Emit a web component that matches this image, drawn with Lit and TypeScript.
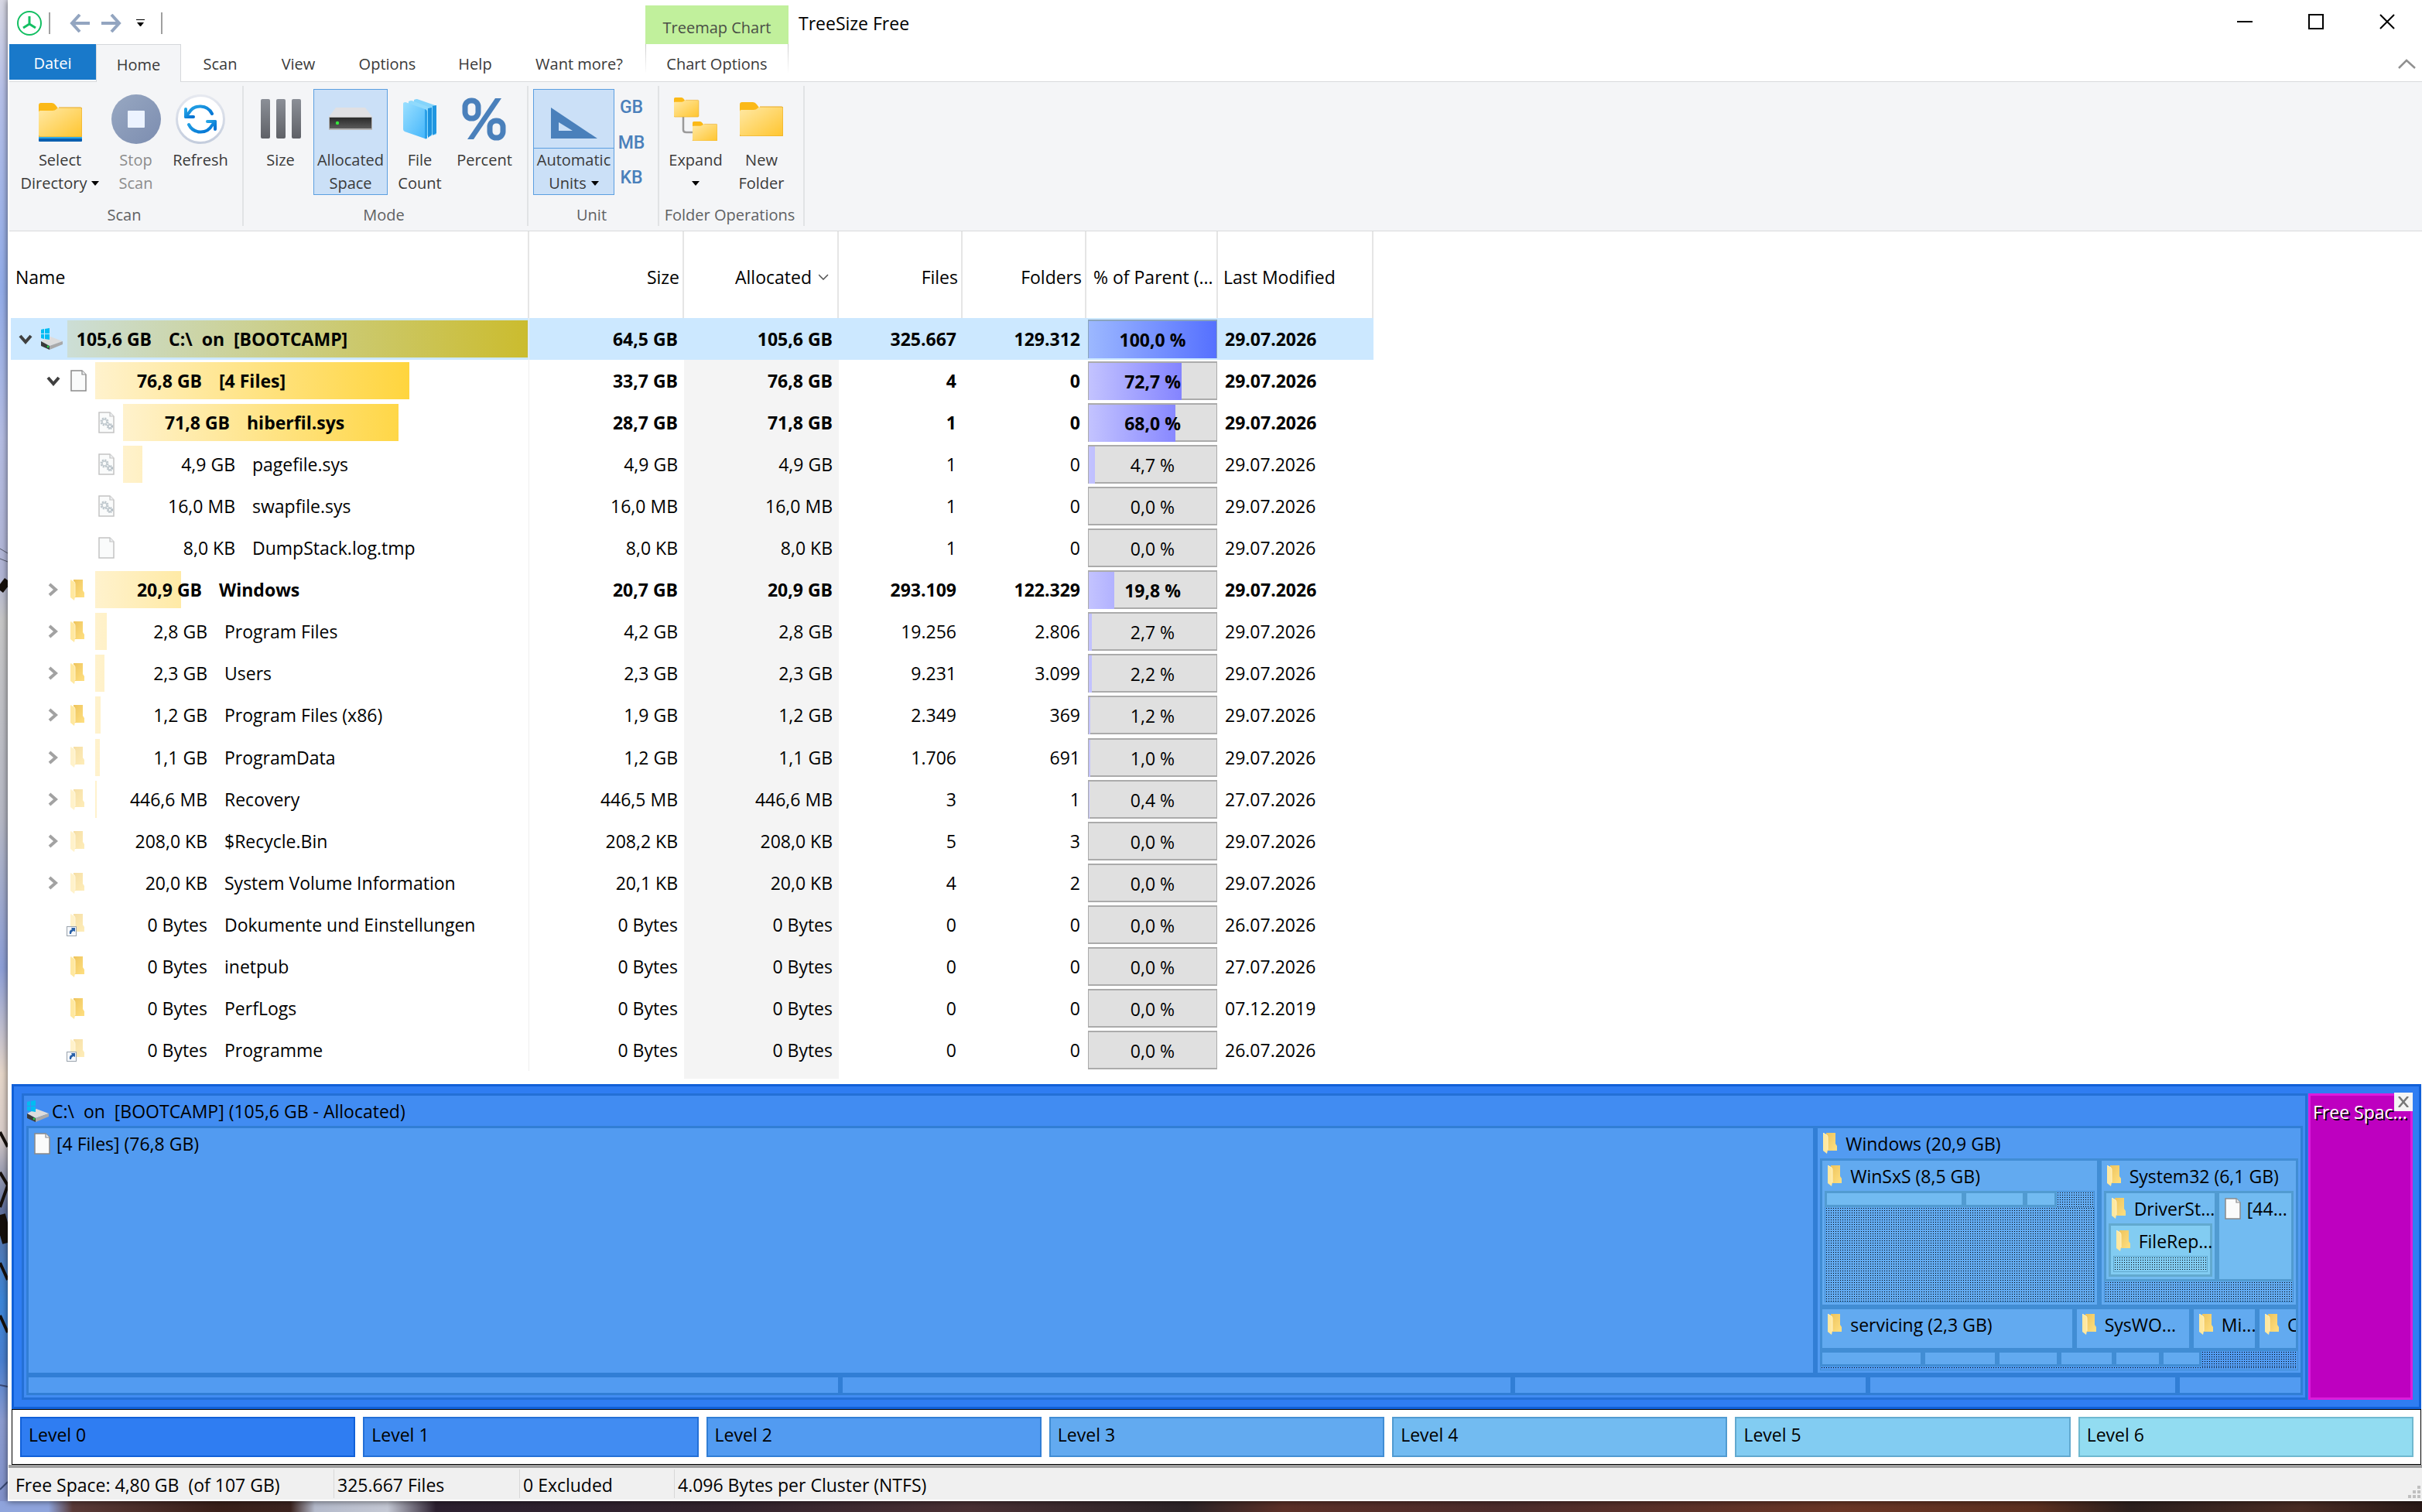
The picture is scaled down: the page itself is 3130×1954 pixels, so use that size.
import { LitElement, html, svg, css, nothing, TemplateResult } from "lit";
import { customElement, property } from "lit/decorators.js";
import { classMap } from "lit/directives/class-map.js";
import { styleMap } from "lit/directives/style-map.js";

type IconName = "drive" | "file" | "sys" | "tmp" | "folder" | "faded" | "link";

interface Entry {
  level: number;
  icon: IconName;
  open?: boolean;
  closed?: boolean;
  bold?: boolean;
  name: string;
  size: string;
  alloc: string;
  files: string;
  folders: string;
  pct: string;
  date: string;
}

const row = (
  level: number, icon: IconName, state: string, name: string, size: string, alloc: string,
  files: string, folders: string, pct: string, date: string,
): Entry => ({
  level, icon, name, size, alloc, files, folders, pct, date,
  open: state.includes("o"), closed: state.includes("c"), bold: state.includes("b"),
});

const ENTRIES: Entry[] = [
  row(0, "drive", "ob", "C:\\  on  [BOOTCAMP]", "64,5 GB", "105,6 GB", "325.667", "129.312", "100,0", "29.07.2026"),
  row(1, "file", "ob", "[4 Files]", "33,7 GB", "76,8 GB", "4", "0", "72,7", "29.07.2026"),
  row(2, "sys", "b", "hiberfil.sys", "28,7 GB", "71,8 GB", "1", "0", "68,0", "29.07.2026"),
  row(2, "sys", "", "pagefile.sys", "4,9 GB", "4,9 GB", "1", "0", "4,7", "29.07.2026"),
  row(2, "sys", "", "swapfile.sys", "16,0 MB", "16,0 MB", "1", "0", "0,0", "29.07.2026"),
  row(2, "tmp", "", "DumpStack.log.tmp", "8,0 KB", "8,0 KB", "1", "0", "0,0", "29.07.2026"),
  row(1, "folder", "cb", "Windows", "20,7 GB", "20,9 GB", "293.109", "122.329", "19,8", "29.07.2026"),
  row(1, "folder", "c", "Program Files", "4,2 GB", "2,8 GB", "19.256", "2.806", "2,7", "29.07.2026"),
  row(1, "folder", "c", "Users", "2,3 GB", "2,3 GB", "9.231", "3.099", "2,2", "29.07.2026"),
  row(1, "folder", "c", "Program Files (x86)", "1,9 GB", "1,2 GB", "2.349", "369", "1,2", "29.07.2026"),
  row(1, "faded", "c", "ProgramData", "1,2 GB", "1,1 GB", "1.706", "691", "1,0", "29.07.2026"),
  row(1, "faded", "c", "Recovery", "446,5 MB", "446,6 MB", "3", "1", "0,4", "27.07.2026"),
  row(1, "faded", "c", "$Recycle.Bin", "208,2 KB", "208,0 KB", "5", "3", "0,0", "29.07.2026"),
  row(1, "faded", "c", "System Volume Information", "20,1 KB", "20,0 KB", "4", "2", "0,0", "29.07.2026"),
  row(1, "link", "", "Dokumente und Einstellungen", "0 Bytes", "0 Bytes", "0", "0", "0,0", "26.07.2026"),
  row(1, "folder", "", "inetpub", "0 Bytes", "0 Bytes", "0", "0", "0,0", "27.07.2026"),
  row(1, "folder", "", "PerfLogs", "0 Bytes", "0 Bytes", "0", "0", "0,0", "07.12.2019"),
  row(1, "link", "", "Programme", "0 Bytes", "0 Bytes", "0", "0", "0,0", "26.07.2026"),
];

/* ---------- small item icons ---------- */

const folderShape = svg`
  <path d="M4 0H16V14L18 17V23H5Z" fill="url(#fs)"/>
  <path d="M0 0L5 3Q6 4 6 6V22L5 27L0 23Z" fill="#ffe8a0"/>
  <path d="M0 0L5 3Q6 4 6 6V22" fill="none" stroke="#fff3c8" stroke-width="1"/>
  <defs><linearGradient id="fs" x1="0" y1="0" x2="1" y2="1">
    <stop offset="0" stop-color="#eec45c"/><stop offset="1" stop-color="#ffe082"/>
  </linearGradient></defs>`;

const fileShape = (edge: string) => svg`
  <path d="M1 1H15L20 6V27H1Z" fill="#fafbfb" stroke=${edge} stroke-width="1.5"/>
  <path d="M15 1V6H20" fill="#eceef0" stroke=${edge} stroke-width="1.2"/>`;

const driveShape = svg`
  <path d="M1 17L13 11L29 17L12 23Z" fill="#dcdcdc"/>
  <path d="M12 23L29 17V21L12 28Z" fill="#a9a9a9"/>
  <path d="M1 17L12 23V28L1 23Z" fill="#3a3a3a"/>
  <circle cx="10" cy="24" r="1.4" fill="#2bd14c"/>
  <path d="M1 2L5 1V7H1ZM6 1L12 0V7H6ZM1 8H5V14L1 13ZM6 8H12V15L6 14Z" fill="#00bcf2"/>`;

function itemIcon(name: IconName): TemplateResult {
  switch (name) {
    case "drive":
      return html`<svg width="30" height="28" viewBox="0 0 30 28" aria-hidden="true">${driveShape}</svg>`;
    case "file":
      return html`<svg width="21" height="28" viewBox="0 0 21 28" aria-hidden="true">${fileShape("#8a8a8a")}</svg>`;
    case "tmp":
      return html`<svg width="21" height="28" viewBox="0 0 21 28" aria-hidden="true">${fileShape("#c4c4c4")}</svg>`;
    case "sys":
      return html`<svg width="21" height="28" viewBox="0 0 21 28" aria-hidden="true">
        ${fileShape("#c4c4c4")}
        <circle cx="8" cy="13" r="4" fill="none" stroke="#bcc5cb" stroke-width="3" stroke-dasharray="2 1.1"/>
        <circle cx="8" cy="13" r="3" fill="none" stroke="#c6ced3" stroke-width="1.6"/>
        <circle cx="15" cy="19" r="3" fill="none" stroke="#b4bec5" stroke-width="2.2" stroke-dasharray="1.6 0.8"/>
        <circle cx="15" cy="19" r="2" fill="none" stroke="#b4bec5" stroke-width="1"/>
      </svg>`;
    case "folder":
      return html`<svg width="18" height="27" viewBox="0 0 18 27" aria-hidden="true">${folderShape}</svg>`;
    case "faded":
      return html`<svg width="18" height="27" viewBox="0 0 18 27" aria-hidden="true"><g opacity="0.55">${folderShape}</g></svg>`;
    case "link":
      return html`<svg class="link" width="23" height="29" viewBox="0 0 23 29" aria-hidden="true">
        <g opacity="0.55" transform="translate(5 0)">${folderShape}</g>
        <rect x="0.5" y="16.500" width="12" height="12" fill="#f6f8fb" stroke="#9aa3ad"/>
        <path d="M4 26Q3 21 7 20L6 18H11V23L9 22Q6 23 6 26Z" fill="#2a61a8"/>
      </svg>`;
  }
}

const chevron = (open: boolean) => open
  ? html`<svg width="18" height="13" viewBox="0 0 18 13" aria-hidden="true"><path d="M2 2L9 10L16 2" fill="none" stroke="#404040" stroke-width="4"/></svg>`
  : html`<svg width="13" height="18" viewBox="0 0 13 18" aria-hidden="true"><path d="M2 2L10 9L2 16" fill="none" stroke="#a2a2a2" stroke-width="4"/></svg>`;

/* ---------- ribbon pictures ---------- */

const bigFolder = (x: number, y: number, k: number) => svg`
  <g transform="translate(${x} ${y}) scale(${k})">
    <path d="M0 3Q0 0 3 0H17Q20 0 22 3L25 7L22 12H0Z" fill="#fbb917"/>
    <path d="M0 12Q0 10 2 10H18Q21 10 23 8Q24 6 27 6H54Q56 6 56 8V42Q56 44 54 44H2Q0 44 0 42Z" fill="url(#bf)"/>
    <path d="M0 42Q0 44 2 44H54Q56 44 56 42V8Q56 6 54 6H26" fill="none" stroke="#e8a820" stroke-width="1"/>
  </g>`;
const bigFolderFill = svg`<defs><linearGradient id="bf" x1="0" y1="0" x2="1" y2="1">
  <stop offset="0" stop-color="#ffe9a6"/><stop offset="1" stop-color="#ffc52f"/></linearGradient></defs>`;

const PICTURES: Record<string, TemplateResult> = {
  select: html`<svg width="56" height="50" viewBox="0 0 56 50">${bigFolderFill}${bigFolder(0, 0, 1)}
    <rect y="44" width="56" height="3" fill="#2fa8ea"/><rect y="46" width="56" height="4" rx="1" fill="#0a5fb0"/></svg>`,
  stop: html`<svg width="64" height="64" viewBox="0 0 64 64"><defs><linearGradient id="st" x1="0" y1="0" x2="1" y2="1">
    <stop offset="0" stop-color="#98a8c2"/><stop offset="1" stop-color="#7c8db0"/></linearGradient></defs>
    <circle cx="32" cy="32" r="32" fill="url(#st)"/><rect x="21" y="21" width="22" height="22" rx="1" fill="#ecf3ff"/></svg>`,
  refresh: html`<svg width="64" height="64" viewBox="0 0 64 64"><defs><linearGradient id="rf" x1="0" y1="0" x2="1" y2="1">
    <stop offset="0" stop-color="#26a5e6"/><stop offset="1" stop-color="#0070d2"/></linearGradient>
    <linearGradient id="rr" x1="0" y1="0" x2="0" y2="1"><stop offset="0" stop-color="#e6e9f0"/><stop offset="1" stop-color="#c4cddd"/></linearGradient></defs>
    <circle cx="32" cy="32" r="30.500" fill="#fff" stroke="url(#rr)" stroke-width="3"/>
    <g fill="none" stroke="url(#rf)" stroke-width="4" stroke-linecap="round" stroke-linejoin="round">
      <path d="M47 25A17 17 0 0 0 17 24L13 29"/><path d="M13 19V29H23"/>
      <path d="M17 39A17 17 0 0 0 47 40L51 35"/><path d="M41 35H51V45"/></g></svg>`,
  size: html`<svg width="54" height="52" viewBox="0 0 54 52"><defs><linearGradient id="sz" x1="0" y1="0" x2="0" y2="1">
    <stop offset="0" stop-color="#8b8f97"/><stop offset="1" stop-color="#5f6167"/></linearGradient></defs>
    <rect x="1" width="12" height="51" rx="2" fill="url(#sz)"/><rect x="21" width="12" height="51" rx="2" fill="url(#sz)"/><rect x="41" width="12" height="51" rx="2" fill="url(#sz)"/></svg>`,
  allocated: html`<svg width="56" height="30" viewBox="0 0 56 30"><defs><linearGradient id="al" x1="0" y1="0" x2="0" y2="1">
    <stop offset="0" stop-color="#2a2a2a"/><stop offset="1" stop-color="#5a5a5a"/></linearGradient></defs>
    <path d="M9 0H47L56 12V14H0V12Z" fill="#e0e0e3"/><rect y="12" width="56" height="17" rx="1" fill="#b4b4b4"/>
    <rect x="1" y="13" width="54" height="14" fill="url(#al)"/><circle cx="11" cy="20" r="2.200" fill="#35e83c"/></svg>`,
  count: html`<svg width="44" height="52" viewBox="0 0 44 52"><defs><linearGradient id="ct" x1="0" y1="0" x2="1" y2="1">
    <stop offset="0" stop-color="#9be0ff"/><stop offset="1" stop-color="#41b4fb"/></linearGradient></defs>
    <path d="M14 1Q16 0 18 0L41 8Q43 9 43 11V44Q43 47 40 46L14 40Z" fill="#84d4fb"/><path d="M38 9L43 8V44L38 47Z" fill="#2196e0"/>
    <path d="M7 3Q9 2 11 2L35 11Q37 12 37 14V46Q37 49 34 48L7 42Z" fill="#90dafc"/><path d="M32 12L37 11V46L32 50Z" fill="#1c92de"/>
    <path d="M0 6Q0 4 3 4L28 13Q31 14 31 17V50Q31 52 28 51L2 42Q0 41 0 39Z" fill="url(#ct)"/><path d="M28 13Q31 14 31 17V50Q31 52 28 51Z" fill="#2a9fe8"/></svg>`,
  percent: html`<svg width="58" height="56" viewBox="0 0 58 56" fill="none" stroke="#4a80bb">
    <rect x="4" y="4" width="17" height="23" rx="8" stroke-width="7"/><rect x="36" y="30" width="17" height="22" rx="8" stroke-width="7"/>
    <path d="M43 1H51L15 54H7Z" fill="#4a80bb" stroke="none"/></svg>`,
  units: html`<svg width="60" height="40" viewBox="0 0 60 40"><path d="M0 0L60 40H0ZM10 19V30H28Z" fill="#4a80bb" fill-rule="evenodd"/></svg>`,
  expand: html`<svg width="56" height="56" viewBox="0 0 56 56">${bigFolderFill}
    <path d="M12 24V42Q12 45 16 45H26" fill="none" stroke="#9a9a9a" stroke-width="2.500"/>
    ${bigFolder(0, 0, 0.57)}${bigFolder(24, 31, 0.57)}</svg>`,
  folder: html`<svg width="56" height="44" viewBox="0 0 56 44">${bigFolderFill}${bigFolder(0, 0, 1)}</svg>`,
};

/* ---------- treemap tile ---------- */

@customElement("map-tile")
export class MapTile extends LitElement {
  @property({ type: Number }) level = 0;
  @property() label = "";
  @property() icon = "";

  static styles = css`
    :host { display: block; min-width: 0; min-height: 0; }
    .tile {
      box-sizing: border-box; height: 100%; overflow: hidden;
      display: flex; flex-direction: column;
      border: 3px solid; padding: 0 3px 3px;
    }
    .l1 { background: #418cf2; border-color: #2470d6; }
    .l2 { background: #529bf1; border-color: #317ed5; }
    .l3 { background: #62aaf0; border-color: #418dd4; }
    .l4 { background: #72bbf1; border-color: #519bd1; }
    .l5 { background: #82ccf2; border-color: #62a9cf; overflow: visible; }
    .title {
      display: flex; align-items: center; flex: none; gap: 11px; height: 39px; padding-left: 4px;
      font-size: 23px; line-height: 32px; color: #000; white-space: pre;
    }
    .title svg { flex: none; }
    .l1 > .title { gap: 3px; padding-left: 0; }
    .l2 > .file, .l4 > .file { gap: 8px; }
    .body { flex: 1; min-height: 0; display: grid; }
  `;

  render() {
    const cls = { tile: true, ["l" + this.level]: true };
    return html`<div class=${classMap(cls)}>
      ${this.label
        ? html`<div class=${classMap({ title: true, file: this.icon === "file" })}>${this.icon ? itemIcon(this.icon as IconName) : nothing}<span>${this.label}</span></div>`
        : nothing}
      ${this.label ? html`<div class="body"><slot></slot></div>` : nothing}
    </div>`;
  }
}

/* ---------- the window ---------- */

@customElement("app-root")
export class AppRoot extends LitElement {
  static styles = css`
    :host { display: block; font-family: "Open Sans", "Noto Sans", sans-serif; color: #000; }
    * { box-sizing: border-box; }
    button { font: inherit; color: inherit; border: 0; background: none; padding: 0; margin: 0; }
    svg { display: block; }

    .desktop {
      position: relative; min-height: 100vh; display: flex; flex-direction: column; padding: 0 0 14px 10px;
      background:
        linear-gradient(90deg, #8fa4dc 0 2%, #5a3a38 3%, #3a201a 9%, #3c2420 12%, #b4bacb 13%, #c4c8d4 16%, #2c2030 18%, #33242e 30%, #4a3034 40%, #2c2428 49%, #5c3028 53%, #4c2c2c 62%, #6a3626 76%, #5c3020 84%, #2c201e 88%, #4a2c24 95%, #2a1a18) bottom / 100% 14px no-repeat,
        linear-gradient(180deg, #d8d8e4, #b6c0e8 6%, #92ace8 19%, #b4bce2 29%, #b0b4d4 38%, #c6c6c6 41%, #b6b8c4 54%, #8c9ed6 64%, #e6d6c8 71%, #d8ccc8 75%, #60709c 80%, #3c86d8 86%, #4a80d0 90%, #8c9cd0 94%, #7f8fc8);
    }
    .branches { position: absolute; left: 0; top: 0; width: 10px; height: 100%; }
    .window {
      flex: 1; min-width: 0; display: flex; flex-direction: column; background: #fff; position: relative;
      box-shadow: 0 0 8px rgba(0, 0, 0, 0.6);
    }

    /* title bar and tabs share one band: the context tab spans both rows */
    .head { display: flex; height: 105px; padding-left: 2px; }
    .head-left { width: 822px; display: flex; flex-direction: column; flex: none; }
    .quick { height: 57px; display: flex; align-items: center; padding: 3px 0 0 10px; }
    .quick .sep { width: 2px; height: 28px; background: #a0a0a0; margin: 0 0 0 9px; }
    .quick .back { margin-left: 25px; }
    .quick .fwd { margin-left: 15px; }
    .quick .more { margin-left: 19px; }
    .quick .end { margin-left: 21px; }
    .tabs { display: grid; grid-template-columns: 112px 110px 101px 101px 129px 98px 171px; height: 48px; }
    .tab { font-size: 20px; line-height: 51px; color: #3a3a3a; height: 49px; text-align: center; }
    .tab.file { background: #1979ca; color: #fff; height: 46px; line-height: 49px; }
    .tab.active { background: #f4f5f7; border: 1px solid #d5d8db; border-bottom: 0; position: relative; height: 49px; }
    .context { width: 185px; padding-top: 7px; flex: none; display: flex; flex-direction: column; }
    .context-name { height: 50px; background: #c1f09c; color: #4a4f46; text-align: center; font-size: 20px; line-height: 58px; }
    .context .tab {
      height: 37px; border: 1px solid; border-top: 0; border-bottom: 0;
      border-image: linear-gradient(#c8c8c8, #fff) 1;
    }
    .title { flex: 1; font-size: 23px; line-height: 32px; padding: 14px 0 0 13px; }
    .sys { display: flex; flex-direction: column; align-items: flex-end; }
    .sys-row { display: flex; gap: 72px; padding: 18px 35px 0 0; height: 76px; }
    .sys-row button { height: 20px; }
    .collapse { padding-right: 8px; }

    .ribbon { display: flex; height: 194px; background: #f4f5f7; border: solid #d8dadc; border-width: 1px 0; margin-left: 2px; padding: 5px 0; flex: none; }
    .group { display: flex; flex-direction: column; justify-content: space-between; border-right: 2px solid #e1e3e5; height: 181px; flex: none; }
    .g-scan { width: 303px; } .g-mode { width: 368px; } .g-unit { width: 169px; } .g-ops { width: 188px; }
    .buttons { display: flex; padding: 4px 0 0 5px; }
    .g-scan .buttons, .g-unit .buttons { padding-left: 6px; }
    .group-name { text-align: center; font-size: 20px; line-height: 28px; color: #5f6163; padding-right: 4px; }
    .big {
      height: 137px; border: 1px solid transparent; display: flex; flex-direction: column; align-items: stretch;
      font-size: 20px; line-height: 30px; color: #3a3a3a; text-align: center;
    }
    .big.on { background: #cbe0f7; border-color: #5c9fe0; }
    .big.off { color: #8c8c8c; }
    .pic { height: 76px; display: flex; align-items: center; justify-content: center; flex: none; }
    .pic.low { padding-top: 8px; }
    .split .pic { border-bottom: 1px solid #5c9fe0; padding-top: 10px; }
    .cap { display: flex; justify-content: center; align-items: center; gap: 6px; height: 30px; white-space: nowrap; }
    .arrow { width: 0; height: 0; border: 5px solid transparent; border-top: 6px solid #000; border-bottom: 0; }
    .unit-list { width: 44px; height: 137px; display: flex; flex-direction: column; align-items: center; justify-content: space-between; padding: 9px 0 7px; }
    .unit-list button { font: 500 23px/30px Roboto, "Open Sans", sans-serif; color: #4a80bb; }

    .files { margin-left: 4px; }
    table { border-collapse: separate; border-spacing: 0; table-layout: fixed; width: 1761px; font-size: 23px; line-height: 32px; }
    th, td { padding: 0; font-weight: inherit; }
    thead th { height: 112px; border-right: 2px solid #e5e5e5; font-weight: 400; text-align: right; padding: 5px 4px 0 0; white-space: nowrap; background-clip: padding-box; }
    thead th.left { text-align: left; }
    thead th.c-name { padding-left: 6px; }
    thead th.c-pct { padding-left: 9px; }
    thead th.c-date { padding-left: 7px; }
    .sort { display: flex; justify-content: flex-end; align-items: center; gap: 9px; padding-right: 7px; }
    tbody td { height: 54px; text-align: right; padding-right: 8px; }
    tbody tr:nth-child(11) td { height: 55px; }
    tbody td.name { padding: 0 1px 0 0; border-right: 1px solid #efefef; text-align: left; }
    tbody td.sorted { background: #f4f4f4; }
    tbody td.date { text-align: left; padding: 0 0 0 9px; }
    tbody td.pct { padding: 0 1px 0 2px; }
    tr.bold { font-weight: 700; }
    tr.selected td, tr.selected td.sorted { background: #cce8ff; }
    tbody tr.filler td { height: 10px; }

    .cell { display: flex; align-items: center; height: 48px; }
    .toggle { width: 37px; display: flex; justify-content: center; flex: none; }
    .l1 { padding-left: 36px; }
    .l2 { padding-left: 72px; }
    .ico { width: 36px; flex: none; display: flex; }
    .ico { padding-left: 1px; }
    .l2 .ico, .l1 .ico { padding-left: 4px; }
    .l1 .ico svg.link { margin-left: -5px; }
    .track { flex: 1; display: grid; height: 48px; min-width: 0; }
    .track > * { grid-area: 1 / 1; }
    .bar { background-image: linear-gradient(90deg, #fff2cd, #ffca08); }
    .selected .bar { background-image: linear-gradient(90deg, #ccded6, #cbbc2e); }
    .label { display: grid; grid-template-columns: 145px 1fr; gap: 22px; align-items: center; white-space: pre; line-height: 34px; }
    .bold .label { grid-template-columns: 138px 1fr; gap: 22px; }
    .bold .l0 .label { grid-template-columns: 109px 1fr; }
    .amount { text-align: right; }

    .meter { display: grid; height: 50px; background: #e0e0e0; border: solid #ababab; border-width: 2px 1px; text-align: center; line-height: 48px; }
    .meter > * { grid-area: 1 / 1; }
    .fill { background-image: linear-gradient(90deg, #c3c3ff, #6c6cff); }
    .selected .fill { background-image: linear-gradient(90deg, #9cb8ff, #5570ff); }
    .selected .meter { border-color: #89a4bd; }

    .treemap {
      flex: 1 0 420px; display: grid; grid-template-columns: 2954fr 136fr;
      margin: 7px 1px 0 5px; padding: 9px 8px 9px 10px; border: 3px solid #1160d8; background: #2f7df2; position: relative;
    }
    .treemap map-tile { height: 100%; }
    .rows-l2 { display: grid; grid-template-rows: 322fr 26fr; min-height: 0; }
    .cols-l2a { display: grid; grid-template-columns: 2313fr 630fr; min-height: 0; }
    .cols-l2b { display: grid; grid-template-columns: 1052fr 870fr 459fr 400fr 162fr; min-height: 0; }
    .rows-l3 { display: grid; grid-template-rows: 192fr 56fr 21fr 5fr; min-height: 0; }
    .cols-l3a { display: grid; grid-template-columns: 360fr 257fr; min-height: 0; }
    .cols-l3b { display: grid; grid-template-columns: 328fr 151fr 85fr 53fr; min-height: 0; }
    .cols-l3c { display: grid; grid-template-columns: 133fr 96fr 79fr 71fr 61fr 52fr 125fr; min-height: 0; }
    .rows-sxs { display: grid; grid-template-rows: 21fr 123fr; min-height: 0; }
    .cols-sxs { display: grid; grid-template-columns: 180fr 78fr 41fr 49fr; min-height: 0; }
    .rows-s32 { display: grid; grid-template-rows: 117fr 27fr; min-height: 0; }
    .cols-s32 { display: grid; grid-template-columns: 146fr 99fr; min-height: 0; }
    .dots {
      min-width: 0; min-height: 0; border: 1px solid #418dd4;
      background-image: conic-gradient(from 270deg at 1px 1px, #000 90deg, transparent 0);
      background-size: 3px 3px; background-position: 1px 1px;
    }
    .dots.open-top { border-top: 0; }
    .dots.open-left { border-left: 0; border-bottom: 0; }
    .dots.deep { border-color: #62a9cf; }
    .free { background: #be00c0; border: 3px solid #dc1cdc; margin-left: 1px; color: #fff; text-shadow: 2px 2px 0 #000; font-size: 23px; line-height: 32px; padding: 5px 0 0 3px; white-space: nowrap; overflow: hidden; }
    .shut { position: absolute; top: 8px; right: 8px; width: 24px; height: 24px; background: #f4f4f4; display: grid; place-items: center; }

    .legend { display: grid; grid-template-columns: repeat(7, 1fr); gap: 10px; margin: 0 1px 0 5px; border: 1px solid #000; padding: 9px 9px 9px 10px; height: 72px; flex: none; }
    .lv { border: 2px solid; font-size: 23px; line-height: 42px; padding-left: 9px; }
    .v0 { background: #2f7df2; border-color: #1160d8; }
    .v1 { background: #418cf2; border-color: #2470d6; }
    .v2 { background: #529bf1; border-color: #317ed5; }
    .v3 { background: #62aaf0; border-color: #418dd4; }
    .v4 { background: #72bbf1; border-color: #519bd1; }
    .v5 { background: #82ccf2; border-color: #62a9cf; }
    .v6 { background: #92dcf1; border-color: #70b9d0; }

    .status { height: 47px; flex: none; margin-left: 1px; border-top: 4px solid #a0a0a0; border-bottom: 2px solid #fff; background: #f0f0f0; display: flex; font-size: 23px; white-space: pre; padding: 2px 2px 2px 5px; }
    .status div { border-right: 1px solid #d8d8d8; padding-left: 4px; line-height: 40px; }
    .s1 { width: 416px; } .s2 { width: 240px; } .s3 { width: 200px; }
    .status .s4 { flex: 1; border: 0; }
    .status svg { align-self: flex-end; }
  `;

  private bigButton(pic: string, lines: string[], width: number, o: { on?: boolean; off?: boolean; arrow?: boolean; split?: boolean; low?: boolean } = {}) {
    return html`<button class=${classMap({ big: true, on: !!o.on, off: !!o.off, split: !!o.split })}
      style=${styleMap({ width: width + "px" })} ?disabled=${!!o.off}>
      <span class=${classMap({ pic: true, low: !!o.low })} aria-hidden="true">${PICTURES[pic]}</span>
      ${lines.map((t, i) => html`<span class="cap">${t}${o.arrow && i === lines.length - 1 ? html`<i class="arrow"></i>` : nothing}</span>`)}
    </button>`;
  }

  private fileRow(e: Entry) {
    const p = parseFloat(e.pct.replace(",", "."));
    const span = p > 0 ? `${10000 / p}% 100%` : "0 0";
    return html`<tr class=${classMap({ bold: !!e.bold, selected: e.level === 0 })}>
      <td class="name"><div class=${"cell l" + e.level}>
        ${e.open || e.closed
          ? html`<button class="toggle" aria-label=${e.open ? "Collapse" : "Expand"}>${chevron(!!e.open)}</button>`
          : html`<span class="toggle"></span>`}
        <span class="ico">${itemIcon(e.icon)}</span>
        <div class="track">
          <div class="bar" style=${styleMap({ width: p + "%", backgroundSize: span })}></div>
          <div class="label"><span class="amount">${e.alloc}</span><span>${e.name}</span></div>
        </div>
      </div></td>
      <td>${e.size}</td>
      <td class="sorted">${e.alloc}</td>
      <td>${e.files}</td>
      <td>${e.folders}</td>
      <td class="pct"><div class="meter">
        <div class="fill" style=${styleMap({ width: p + "%", backgroundSize: span })}></div><span>${e.pct} %</span>
      </div></td>
      <td class="date">${e.date}</td>
    </tr>`;
  }

  private blank(level: number, n: number) {
    return Array.from({ length: n }, () => html`<map-tile .level=${level}></map-tile>`);
  }

  render() {
    return html`<div class="desktop">
      <svg class="branches" viewBox="0 0 10 1954" preserveAspectRatio="none" aria-hidden="true" fill="none" stroke="#16100c">
        <path d="M0 709L10 715M0 722L10 726" stroke="#55586a" stroke-width="1"/>
        <path d="M0 763L10 750" stroke-width="10"/>
        <path d="M0 1463L10 1482M0 1515L10 1532M0 1560L10 1532" stroke-width="4"/>
        <path d="M0 1570L10 1606" stroke-width="14"/>
        <path d="M0 1632L10 1654M0 1700L10 1722" stroke-width="4"/>
        <path d="M0 1790L10 1792M0 1925L10 1915" stroke="#3c4c78" stroke-width="2"/>
      </svg>
      <div class="window">
        <header class="head">
          <div class="head-left">
            <div class="quick">
              <svg width="32" height="32" viewBox="0 0 32 32" fill="none" stroke="#12bf62" aria-hidden="true">
                <circle cx="16" cy="16" r="15" stroke-width="2"/><path d="M16 7V17M16 17L8 22M16 17L24 22" stroke-width="3"/></svg>
              <span class="sep"></span>
              <button class="back" aria-label="Back"><svg width="26" height="24" viewBox="0 0 26 24" fill="none" stroke="#93a5c0" stroke-width="4"><path d="M26 12H3M13 1L3 12L13 23"/></svg></button>
              <button class="fwd" aria-label="Forward"><svg width="26" height="24" viewBox="0 0 26 24" fill="none" stroke="#93a5c0" stroke-width="4"><path d="M0 12H23M13 1L23 12L13 23"/></svg></button>
              <button class="more" aria-label="Customize"><svg width="11" height="10" viewBox="0 0 11 10"><path d="M0 0H11V1H0ZM1 4H10L6 9H5Z"/></svg></button>
              <span class="sep end"></span>
            </div>
            <nav class="tabs">
              <button class="tab file">Datei</button>
              <button class="tab active">Home</button>
              <button class="tab">Scan</button>
              <button class="tab">View</button>
              <button class="tab">Options</button>
              <button class="tab">Help</button>
              <button class="tab">Want more?</button>
            </nav>
          </div>
          <div class="context">
            <div class="context-name">Treemap Chart</div>
            <button class="tab">Chart Options</button>
          </div>
          <div class="title">TreeSize Free</div>
          <div class="sys">
            <div class="sys-row">
              <button aria-label="Minimize"><svg width="20" height="20" viewBox="0 0 20 20"><path d="M0 9H20V11H0Z"/></svg></button>
              <button aria-label="Maximize"><svg width="20" height="20" viewBox="0 0 20 20" fill="none" stroke="#000" stroke-width="2"><rect x="1" y="1" width="18" height="18"/></svg></button>
              <button aria-label="Close"><svg width="20" height="20" viewBox="0 0 20 20" stroke="#000" stroke-width="2"><path d="M1 1L19 19M19 1L1 19"/></svg></button>
            </div>
            <button class="collapse" aria-label="Collapse the ribbon"><svg width="23" height="13" viewBox="0 0 23 13" fill="none" stroke="#909090" stroke-width="2.500"><path d="M1 12L11 2L22 12"/></svg></button>
          </div>
        </header>

        <section class="ribbon">
          <div class="group g-scan">
            <div class="buttons">
              ${this.bigButton("select", ["Select", "Directory"], 119, { arrow: true, low: true })}
              ${this.bigButton("stop", ["Stop", "Scan"], 77, { off: true })}
              ${this.bigButton("refresh", ["Refresh"], 90)}
            </div>
            <div class="group-name">Scan</div>
          </div>
          <div class="group g-mode">
            <div class="buttons">
              ${this.bigButton("size", ["Size"], 85)}
              ${this.bigButton("allocated", ["Allocated", "Space"], 96, { on: true })}
              ${this.bigButton("count", ["File", "Count"], 83)}
              ${this.bigButton("percent", ["Percent"], 84)}
            </div>
            <div class="group-name">Mode</div>
          </div>
          <div class="group g-unit">
            <div class="buttons">
              ${this.bigButton("units", ["Automatic", "Units"], 105, { on: true, split: true, arrow: true })}
              <div class="unit-list"><button>GB</button><button>MB</button><button>KB</button></div>
            </div>
            <div class="group-name">Unit</div>
          </div>
          <div class="group g-ops">
            <div class="buttons">
              ${this.bigButton("expand", ["Expand", ""], 84, { arrow: true })}
              ${this.bigButton("folder", ["New", "Folder"], 86)}
            </div>
            <div class="group-name">Folder Operations</div>
          </div>
        </section>

        <section class="files">
          <table>
            <colgroup><col style="width:670px"><col style="width:200px"><col style="width:200px"><col style="width:160px"><col style="width:160px"><col style="width:170px"><col style="width:201px"></colgroup>
            <thead><tr>
              <th class="left c-name">Name</th><th>Size</th>
              <th><span class="sort">Allocated<svg width="13" height="8" viewBox="0 0 13 8" fill="none" stroke="#505050" stroke-width="1.5" aria-hidden="true"><path d="M0 1L6 7L12 1"/></svg></span></th>
              <th>Files</th><th>Folders</th><th class="left c-pct">% of Parent (...</th><th class="left c-date">Last Modified</th>
            </tr></thead>
            <tbody>
              ${ENTRIES.map((e) => this.fileRow(e))}
              <tr class="filler" aria-hidden="true"><td></td><td></td><td class="sorted"></td><td></td><td></td><td></td><td></td></tr>
            </tbody>
          </table>
        </section>

        <section class="treemap">
          <map-tile .level=${1} icon="drive" label="C:\\  on  [BOOTCAMP] (105,6 GB - Allocated)">
            <div class="rows-l2">
              <div class="cols-l2a">
                <map-tile .level=${2} icon="file" label="[4 Files] (76,8 GB)"></map-tile>
                <map-tile .level=${2} icon="folder" label="Windows (20,9 GB)">
                  <div class="rows-l3">
                    <div class="cols-l3a">
                      <map-tile .level=${3} icon="folder" label="WinSxS (8,5 GB)">
                        <div class="rows-sxs">
                          <div class="cols-sxs">${this.blank(4, 3)}<div class="dots open-left"></div></div>
                          <div class="dots open-top"></div>
                        </div>
                      </map-tile>
                      <map-tile .level=${3} icon="folder" label="System32 (6,1 GB)">
                        <div class="rows-s32">
                          <div class="cols-s32">
                            <map-tile .level=${4} icon="folder" label="DriverSt...">
                              <map-tile .level=${5} icon="folder" label="FileRep..."><div class="dots deep"></div></map-tile>
                            </map-tile>
                            <map-tile .level=${4} icon="file" label="[44..."></map-tile>
                          </div>
                          <div class="dots open-top"></div>
                        </div>
                      </map-tile>
                    </div>
                    <div class="cols-l3b">
                      <map-tile .level=${3} icon="folder" label="servicing (2,3 GB)"></map-tile>
                      <map-tile .level=${3} icon="folder" label="SysWO..."></map-tile>
                      <map-tile .level=${3} icon="folder" label="Mi..."></map-tile>
                      <map-tile .level=${3} icon="folder" label="C"></map-tile>
                    </div>
                    <div class="cols-l3c">${this.blank(3, 6)}<div class="dots open-left"></div></div>
                    <div class="dots open-top"></div>
                  </div>
                </map-tile>
              </div>
              <div class="cols-l2b">${this.blank(2, 5)}</div>
            </div>
          </map-tile>
          <div class="free">Free Spac...</div>
          <button class="shut" aria-label="Close chart"><svg width="14" height="14" viewBox="0 0 14 14" stroke="#777" stroke-width="2.500"><path d="M1 0L13 14M13 0L1 14"/></svg></button>
        </section>

        <section class="legend">
          ${[0, 1, 2, 3, 4, 5, 6].map((n) => html`<div class=${"lv v" + n}>Level ${n}</div>`)}
        </section>

        <footer class="status">
          <div class="s1">Free Space: 4,80 GB  (of 107 GB)</div>
          <div class="s2">325.667 Files</div>
          <div class="s3">0 Excluded</div>
          <div class="s4">4.096 Bytes per Cluster (NTFS)</div>
          <svg width="16" height="16" viewBox="0 0 16 16" fill="#bfbfbf" aria-hidden="true"><path d="M12 0H16V4H12ZM6 6H10V10H6ZM12 6H16V10H12ZM0 12H4V16H0ZM6 12H10V16H6ZM12 12H16V16H12Z"/></svg>
        </footer>
      </div>
    </div>`;
  }
}
